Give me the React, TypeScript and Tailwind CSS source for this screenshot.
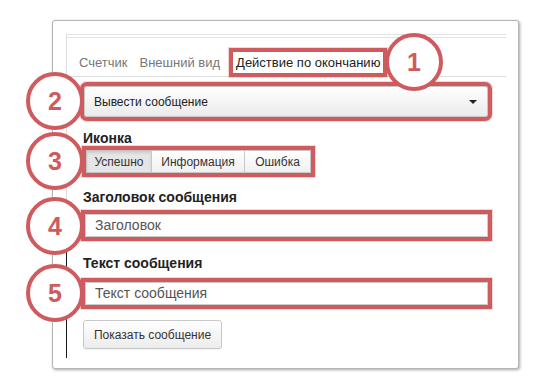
import React from "react";

function Badge({ n, x, y }: { n: string; x: number; y: number }) {
  return (
    <div
      className="absolute flex h-[58px] w-[58px] items-center justify-center rounded-full border-[4px] border-[#cf5b5e] bg-white text-[25px] font-bold text-[#cf5b5e]"
      style={{ left: x - 29, top: y - 29, fontFamily: '"Liberation Sans", Arial, sans-serif' }}
    >
      <span className="leading-none">{n}</span>
    </div>
  );
}

export default function App() {
  return (
    <div
      className="relative h-[389px] w-[538px] overflow-hidden bg-white pl-[52px] pt-[20px] text-[#333]"
      style={{ fontFamily: '"Liberation Sans", Arial, sans-serif' }}
    >
      {/* card */}
      <div className="h-[349px] w-[467px] rounded-[3px] border border-[#b5b5b5] bg-white pl-[13px] pt-[13px] shadow-[1px_1px_3px_rgba(0,0,0,0.35)]">
        <div className="flex h-[324px] w-[440px]">
          {/* left line */}
          <div className="w-[1px] bg-[linear-gradient(to_bottom,#dddddd_0,#dddddd_216px,#1a1a1a_216px)]" />
          <div className="flex-1">
            <div className="h-[4px] border-y border-[#e2e2e2]" />
            {/* tabs */}
            <div className="mt-[14px] flex h-[25px] border-b border-[#dddddd] pl-[6px] text-[13px]">
              <div className="flex h-[21px] items-center px-[6px] text-[#777]">Счетчик</div>
              <div className="flex h-[21px] items-center px-[6px] text-[#777]">Внешний вид</div>
              <div className="ml-[7px] flex h-[21px] items-center bg-white pl-[3px] pr-[3px] text-[#222] outline-4 outline-solid outline-[#cf5b5e] shadow-[0_0_0_5px_rgba(207,91,94,0.25)]">
                Действие по окончанию
              </div>
            </div>
            {/* content */}
            <div className="pl-[16px]">
              <div className="ml-[1px] mt-[9px] flex h-[31px] w-[404px] items-center justify-between rounded-[3px] border border-[#c8c8c8] bg-[linear-gradient(to_bottom,#ffffff,#ebebeb)] pl-[9px] pr-[10px] text-[12px] text-[#222] outline-4 outline-solid outline-[#cf5b5e] shadow-[0_0_0_5px_rgba(207,91,94,0.25)]">
                <span>Вывести сообщение</span>
                <svg width="8" height="4" viewBox="0 0 8 4">
                  <path d="M0 0 L8 0 L4 4 Z" fill="#222" />
                </svg>
              </div>

              <div className="mt-[13px] h-[16px] text-[14px] font-bold leading-[16px] text-[#222]">Иконка</div>

              <div className="ml-[3px] mt-[4px] flex h-[23px] w-fit text-[12px] outline-4 outline-solid outline-[#cf5b5e] shadow-[0_0_0_5px_rgba(207,91,94,0.25)]">
                <div className="flex w-[66px] items-center justify-center border border-[#c2c2c2] bg-[#e6e6e6] text-[#333] shadow-[inset_0_2px_3px_rgba(0,0,0,0.12)]">
                  Успешно
                </div>
                <div className="-ml-px flex w-[94px] items-center justify-center border border-[#c8c8c8] bg-[linear-gradient(to_bottom,#ffffff,#f0f0f0)] text-[#333]">
                  Информация
                </div>
                <div className="-ml-px flex w-[67px] items-center justify-center border border-[#c8c8c8] bg-[linear-gradient(to_bottom,#ffffff,#f0f0f0)] text-[#333]">
                  Ошибка
                </div>
              </div>

              <div className="mt-[16px] h-[16px] text-[14px] font-bold leading-[16px] text-[#222]">Заголовок сообщения</div>
              <div className="ml-[2px] mt-[9px] flex h-[23px] w-[403px] items-center border border-[#cccccc] bg-white pl-[9px] text-[14px] text-[#555] outline-4 outline-solid outline-[#cf5b5e] shadow-[0_0_0_5px_rgba(207,91,94,0.25)]">
                Заголовок
              </div>

              <div className="mt-[18px] h-[16px] text-[14px] font-bold leading-[16px] text-[#222]">Текст сообщения</div>
              <div className="ml-[2px] mt-[11px] flex h-[23px] w-[403px] items-center border border-[#cccccc] bg-white pl-[9px] text-[14px] text-[#555] outline-4 outline-solid outline-[#cf5b5e] shadow-[0_0_0_5px_rgba(207,91,94,0.25)]">
                Текст сообщения
              </div>

              <div className="mt-[15px] flex h-[29px] w-[139px] items-center justify-center rounded-[3px] border border-[#c8c8c8] bg-[linear-gradient(to_bottom,#ffffff,#ececec)] text-[12px] text-[#333] shadow-[0_1px_1px_rgba(0,0,0,0.05)]">
                Показать сообщение
              </div>
            </div>
          </div>
        </div>
      </div>

      <Badge n="1" x={414} y={62} />
      <Badge n="2" x={55} y={101} />
      <Badge n="3" x={55} y={161} />
      <Badge n="4" x={55} y={226} />
      <Badge n="5" x={55} y={293} />
    </div>
  );
}
